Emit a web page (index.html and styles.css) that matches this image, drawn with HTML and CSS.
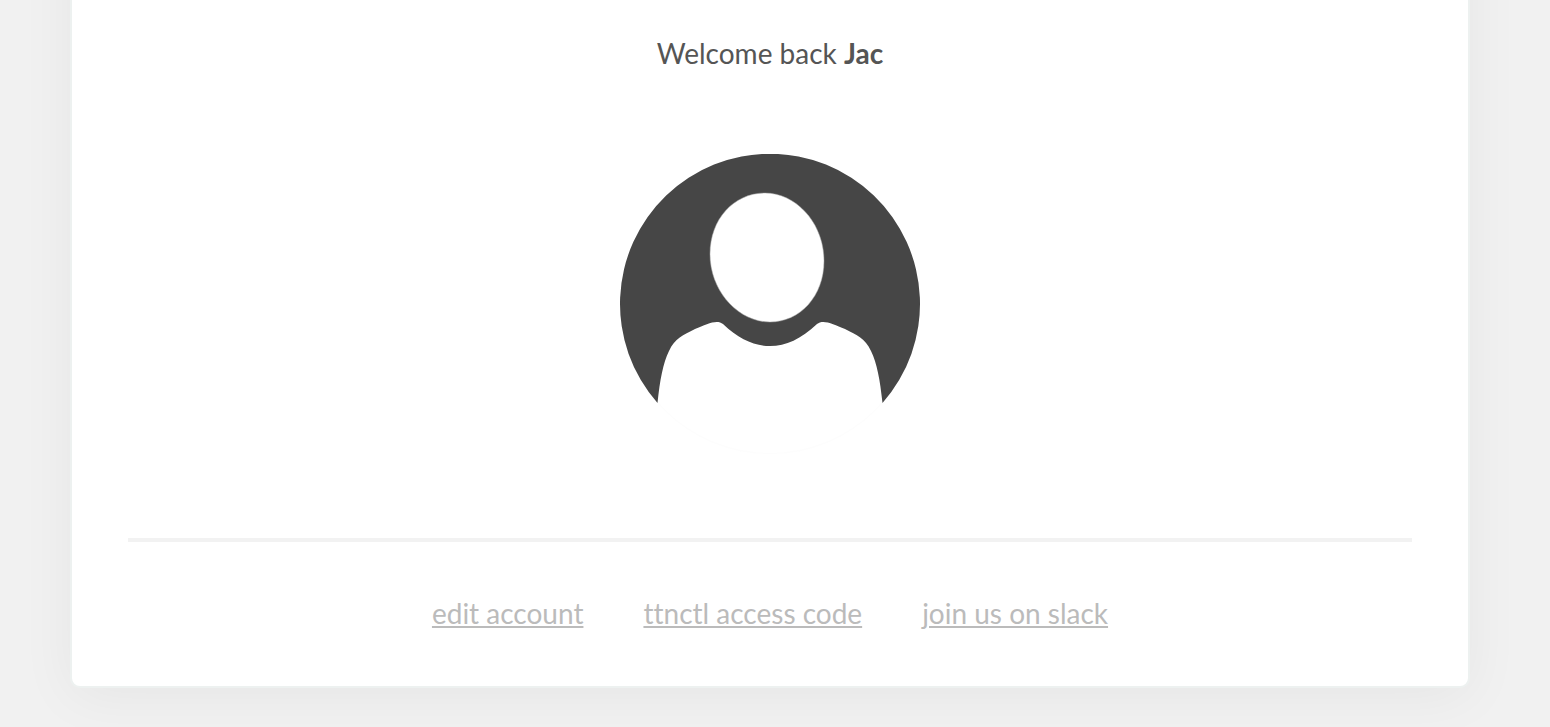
FILE: index.html
```html
<!DOCTYPE html>
<html lang="en">
<head>
  <meta charset="UTF-8">
  <meta name="viewport" content="width=device-width, initial-scale=1.0">
  <title>Account</title>
  <link rel="stylesheet" href="styles.css">
</head>
<body>
  <main class="card">
    <p class="welcome">Welcome back <strong>Jac</strong></p>

    <svg class="avatar" viewBox="0 0 300 300" role="img" aria-label="Profile picture">
      <circle cx="150" cy="150" r="149.500" fill="#fff" stroke="#fdfdfd"/>
      <path fill="#464646" d="M37.500 249A150 150 0 1 1 262.500 249C260 226 257 209 251 197C245 184 237 181 225 175C213 170 203 165 197 170C181 185 166 192 150 192C134 192 119 185 103 170C97 165 87 170 75 175C63 181 55 184 49 197C43 209 40 226 37.500 249Z"/>
      <path fill="#fff" stroke="#aaa" stroke-width="0.500" d="M145 39C176 39 204 69 204 107C204 142 180 168 150 168C118 168 90 137 90 100C90 65 114 39 145 39Z"/>
    </svg>

    <nav class="links">
      <a href="#edit">edit account</a>
      <a href="#access-code">ttnctl access code</a>
      <a href="#slack">join us on slack</a>
    </nav>
  </main>
</body>
</html>
```

FILE: styles.css
```css
* {
  box-sizing: border-box;
}

body {
  margin: 0;
  background: #f1f1f1;
  font-family: Lato, sans-serif;
  font-size: 28px;
  line-height: 40px;
  font-variant-ligatures: none;
  color: #555;
  overflow: hidden;
}

.card {
  margin: -100px 80px 40px 70px;
  padding: 131px 56px 0;
  background: #fff;
  border: 2px solid #edf1f0;
  border-radius: 10px;
  box-shadow: 0 8px 56px rgba(0, 0, 0, 0.05);
}

.welcome {
  margin: 0 0 81px;
  text-align: center;
}

.avatar {
  display: block;
  width: 300px;
  height: 300px;
  margin: 0 auto 84px;
}

.links {
  display: flex;
  flex-wrap: wrap;
  justify-content: center;
  gap: 0 60px;
  padding: 51px 0 53px;
  border-top: 4px solid #f2f2f2;
}

.links a {
  color: #bbb;
}
```
